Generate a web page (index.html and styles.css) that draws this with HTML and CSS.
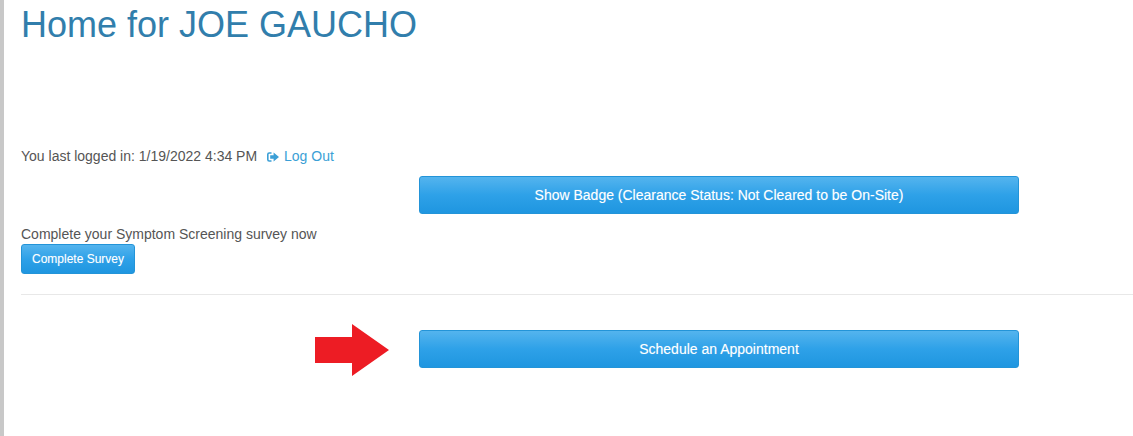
FILE: index.html
```html
<!DOCTYPE html>
<html lang="en">
<head>
<meta charset="utf-8">
<title>Home</title>
<link rel="stylesheet" href="styles.css">
</head>
<body>
<main class="page">
  <h1 class="title">Home for JOE GAUCHO</h1>
  <p class="login">You last logged in: 1/19/2022 4:34 PM
    <a class="logout" href="#"><svg class="logout-icon" viewBox="0 0 12 10" width="12" height="10" aria-hidden="true"><path d="M4.5 1H2.2A1.4 1.4 0 0 0 .8 2.4v5.2A1.4 1.4 0 0 0 2.2 9h2.3" fill="none" stroke="currentColor" stroke-width="1.6"/><path d="M3.2 3.2h3.4V.6L12 5 6.6 9.4V6.8H3.2z" fill="currentColor"/></svg>Log Out</a>
  </p>
  <div class="action-row badge-row">
    <a class="btn btn-wide" href="#">Show Badge (Clearance Status: Not Cleared to be On-Site)</a>
  </div>
  <p class="survey-text">Complete your Symptom Screening survey now</p>
  <a class="btn btn-small" href="#">Complete Survey</a>
  <hr class="divider">
  <div class="action-row schedule-row">
    <svg class="arrow" viewBox="0 0 74 52" width="74" height="52" aria-hidden="true"><path d="M0 13H37V0L74 26 37 52V39H0z" fill="#ed1c24"/></svg>
    <a class="btn btn-wide btn-schedule" href="#">Schedule an Appointment</a>
  </div>
</main>
</body>
</html>
```
FILE: styles.css
```css
* { box-sizing: border-box; }
html, body { margin: 0; height: 100%; }
body {
  background: #fff;
  color: #555;
  font-family: "Liberation Sans", Arial, sans-serif;
  font-size: 14px;
  line-height: 20px;
  overflow: hidden;
}
.page {
  height: 436px;
  border-left: 4px solid #c8c8c8;
  padding-left: 17px;
}
.title {
  margin: 0;
  padding-top: 5px;
  height: 146px;
  color: #317eac;
  font-size: 36px;
  font-weight: 400;
  line-height: 40px;
}
.login { margin: 0; height: 20px; }
.logout { color: #3b9fd6; text-decoration: none; margin-left: 6px; }
.logout-icon { margin-right: 5px; vertical-align: -1px; }
.action-row { display: flex; align-items: flex-start; }
.badge-row { margin-top: 10px; padding-left: 398px; }
.schedule-row { margin-top: 29px; padding-left: 294px; gap: 30px; }
.btn {
  display: flex;
  align-items: center;
  justify-content: center;
  color: #fff;
  text-decoration: none;
  border: 1px solid #2394d8;
  border-radius: 3px;
  background: linear-gradient(#54b4ee, #2ea1e8 50%, #1f96e0);
  text-shadow: 0 0 1px rgba(255, 255, 255, 0.35);
}
.btn-wide { width: 600px; height: 38px; }
.btn-schedule { margin-top: 6px; }
.btn-small { width: 114px; height: 30px; font-size: 12px; }
.survey-text { margin: 10px 0 0; height: 20px; }
.divider { margin: 20px 0 0; border: 0; border-top: 1px solid #e8e8e8; }
.arrow { flex: none; }
```
